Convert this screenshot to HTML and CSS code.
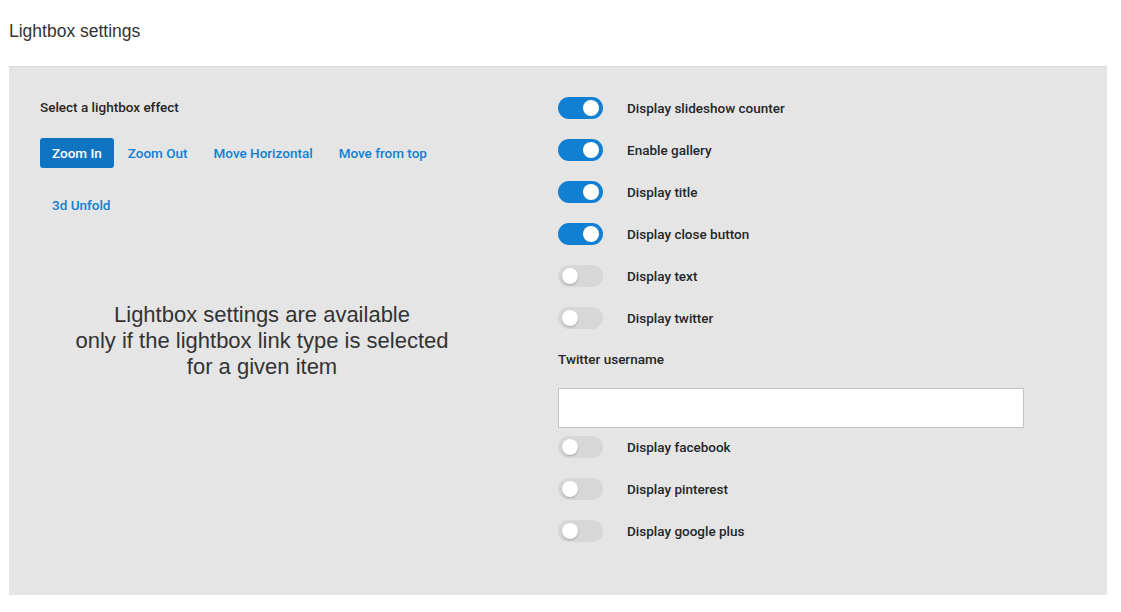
FILE: index.html
```html
<!DOCTYPE html>
<html lang="en">
<head>
    <meta charset="UTF-8">
    <title>Lightbox settings</title>
    <link rel="stylesheet" href="styles.css">
</head>
<body>
    <h1 class="page-title">Lightbox settings</h1>

    <div class="panel">
        <div class="effects-col">
            <div class="field-label">Select a lightbox effect</div>
            <div class="effect-list">
                <button class="effect active">Zoom In</button>
                <button class="effect">Zoom Out</button>
                <button class="effect">Move Horizontal</button>
                <button class="effect">Move from top</button>
                <button class="effect">3d Unfold</button>
            </div>
            <p class="notice">Lightbox settings are available<br>only if the lightbox link type is selected<br>for a given item</p>
        </div>

        <div class="options-col">
            <label class="option"><span class="switch on"></span>Display slideshow counter</label>
            <label class="option"><span class="switch on"></span>Enable gallery</label>
            <label class="option"><span class="switch on"></span>Display title</label>
            <label class="option"><span class="switch on"></span>Display close button</label>
            <label class="option"><span class="switch"></span>Display text</label>
            <label class="option"><span class="switch"></span>Display twitter</label>

            <div class="field-label">Twitter username</div>
            <input class="text-input" type="text">

            <label class="option"><span class="switch"></span>Display facebook</label>
            <label class="option"><span class="switch"></span>Display pinterest</label>
            <label class="option"><span class="switch"></span>Display google plus</label>
        </div>
    </div>
</body>
</html>
```

FILE: styles.css
```css
:root {
    --blue: #1180d2;
    --panel-bg: #e5e5e5;
    --text: #262626;
    --ui-font: Roboto, "Liberation Sans", Arial, sans-serif;
}

body {
    margin: 0;
    padding: 0 9px;
    font-family: "Liberation Sans", Arial, sans-serif;
    color: var(--text);
    background: #fff;
}

.page-title {
    margin: 0;
    padding: 21px 0 0;
    height: 66px;
    box-sizing: border-box;
    font-size: 17.5px;
    font-weight: normal;
    line-height: 20px;
    color: #333;
}

.panel {
    width: 1098px;
    box-sizing: border-box;
    background: var(--panel-bg);
    border-top: 1px solid #dadada;
    padding: 30px 31px 53px;
    display: grid;
    grid-template-columns: 444px 1fr;
    column-gap: 74px;
}

.field-label {
    font-family: var(--ui-font);
    font-size: 13.5px;
    font-weight: 500;
    line-height: 20px;
    color: var(--text);
}

.effect-list {
    display: flex;
    flex-wrap: wrap;
    gap: 22px 2px;
    margin-top: 21px;
}

.effect {
    height: 30px;
    padding: 0 12px;
    border: none;
    border-radius: 3px;
    background: transparent;
    font-family: var(--ui-font);
    font-size: 13.5px;
    font-weight: 500;
    color: var(--blue);
    cursor: pointer;
}

.effect.active {
    background: #0f75c3;
    color: #fff;
}

.notice {
    margin: 82px 0 0;
    text-align: center;
    font-size: 22px;
    line-height: 26px;
    color: #333;
}

.options-col {
    display: flex;
    flex-direction: column;
}

.option {
    display: flex;
    align-items: center;
    gap: 24px;
    height: 22px;
    margin-bottom: 20px;
    font-family: var(--ui-font);
    font-size: 13.5px;
    font-weight: 500;
    cursor: pointer;
}

.option:last-child {
    margin-bottom: 0;
}

.switch {
    position: relative;
    flex: none;
    width: 45px;
    height: 22px;
    border-radius: 11px;
    background: #d7d7d7;
}

.switch::after {
    content: "";
    position: absolute;
    top: 3px;
    left: 4px;
    width: 16px;
    height: 16px;
    border-radius: 50%;
    background: #fff;
    box-shadow: 0 1px 2px rgba(0, 0, 0, 0.25);
}

.switch.on {
    background: var(--blue);
}

.switch.on::after {
    left: 25px;
    box-shadow: none;
}

.text-input {
    width: 466px;
    height: 40px;
    box-sizing: border-box;
    margin: 19px 0 8px;
    border: 1px solid #c4c4c4;
    background: #fff;
    font-family: inherit;
    font-size: 13px;
    padding: 0 8px;
}
```
